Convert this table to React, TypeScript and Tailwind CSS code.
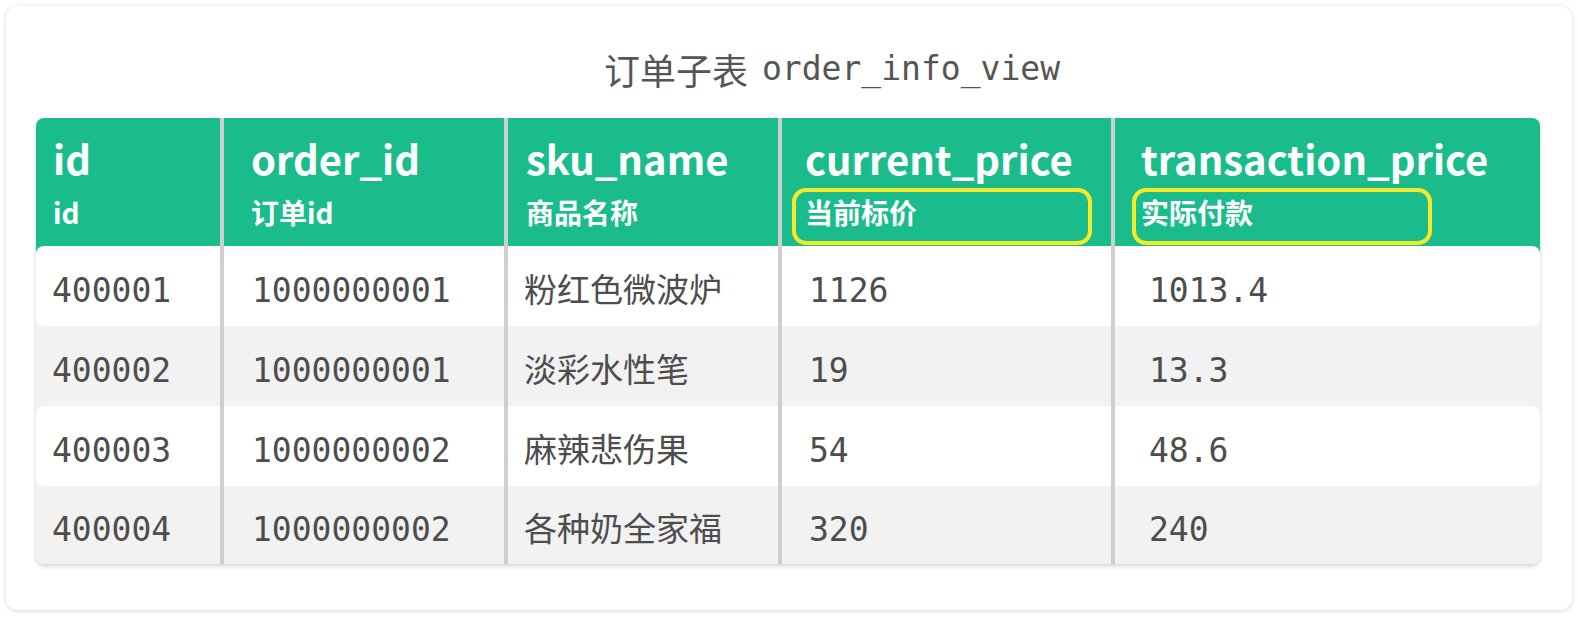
import React from "react";

type Row = {
  id: string;
  orderId: string;
  skuName: string;
  currentPrice: string;
  transactionPrice: string;
};

const rows: Row[] = [
  { id: "400001", orderId: "1000000001", skuName: "粉红色微波炉", currentPrice: "1126", transactionPrice: "1013.4" },
  { id: "400002", orderId: "1000000001", skuName: "淡彩水性笔", currentPrice: "19", transactionPrice: "13.3" },
  { id: "400003", orderId: "1000000002", skuName: "麻辣悲伤果", currentPrice: "54", transactionPrice: "48.6" },
  { id: "400004", orderId: "1000000002", skuName: "各种奶全家福", currentPrice: "320", transactionPrice: "240" },
];

const cjk = { fontFamily: '"Noto Sans CJK SC", "Noto Sans", sans-serif' };
const mono = { fontFamily: '"DejaVu Sans Mono", "Noto Sans CJK SC", monospace' };

const divider = "border-r-4 border-[#cfcfcf]";

function HeadCell({
  name,
  label,
  className,
  highlight,
}: {
  name: string;
  label: string;
  className: string;
  highlight?: string;
}) {
  return (
    <div className={`relative h-[128px] pt-[16px] text-white font-bold ${className}`}>
      <div className="text-[40px] leading-[48px]">{name}</div>
      <div className="mt-[12px] text-[28px] leading-[36px]">{label}</div>
      {highlight && (
        <div
          className={`absolute top-[70px] h-[57px] w-[300px] rounded-[14px] border-4 border-[#f3ea2c] ${highlight}`}
        />
      )}
    </div>
  );
}

export default function App() {
  return (
    <div className="min-h-screen bg-white p-[6px]" style={cjk}>
      <div className="h-[604px] w-[1566px] rounded-[12px] bg-white px-[30px] shadow-[0_1px_5px_rgba(0,0,0,0.16)]">
        <div className="flex h-[112px] items-center justify-center pl-[86px] pt-[14px] text-[#555555]">
          <span className="text-[36px]" style={cjk}>订单子表</span>
          <span className="ml-[14px] text-[33px]" style={mono}>order_info_view</span>
        </div>

        <div className="w-[1504px] rounded-[8px] shadow-[0_2px_4px_rgba(0,0,0,0.18)]">
          <div className="grid grid-cols-[188px_284px_274px_333px_425px] rounded-t-[8px] bg-[#1bbc8b]">
            <HeadCell name="id" label="id" className={`pl-[17px] ${divider}`} />
            <HeadCell name="order_id" label="订单id" className={`pl-[27px] ${divider}`} />
            <HeadCell name="sku_name" label="商品名称" className={`pl-[18px] ${divider}`} />
            <HeadCell
              name="current_price"
              label="当前标价"
              className={`pl-[23px] ${divider}`}
              highlight="left-[10px]"
            />
            <HeadCell
              name="transaction_price"
              label="实际付款"
              className="pl-[26px]"
              highlight="left-[17px]"
            />
          </div>

          <div className="rounded-b-[8px] bg-[linear-gradient(to_bottom,#1bbc8b_20px,#f2f2f2_20px)]">
            {rows.map((row, idx) => (
              <div
                key={row.id}
                className={`grid grid-cols-[188px_284px_274px_333px_425px] text-[#4d4d4d] ${
                  idx % 2 === 0 ? "rounded-[8px] bg-white" : ""
                } ${idx === rows.length - 1 ? "h-[78px]" : "h-[80px]"}`}
              >
                <div className={`flex items-center pl-[16px] pt-[9px] text-[33px] ${divider}`} style={mono}>
                  {row.id}
                </div>
                <div className={`flex items-center pl-[28px] pt-[9px] text-[33px] ${divider}`} style={mono}>
                  {row.orderId}
                </div>
                <div className={`flex items-center pl-[16px] pt-[6px] text-[33px] ${divider}`} style={cjk}>
                  {row.skuName}
                </div>
                <div className={`flex items-center pl-[27px] pt-[9px] text-[33px] ${divider}`} style={mono}>
                  {row.currentPrice}
                </div>
                <div className="flex items-center pl-[34px] pt-[9px] text-[33px]" style={mono}>
                  {row.transactionPrice}
                </div>
              </div>
            ))}
          </div>
        </div>
      </div>
    </div>
  );
}
